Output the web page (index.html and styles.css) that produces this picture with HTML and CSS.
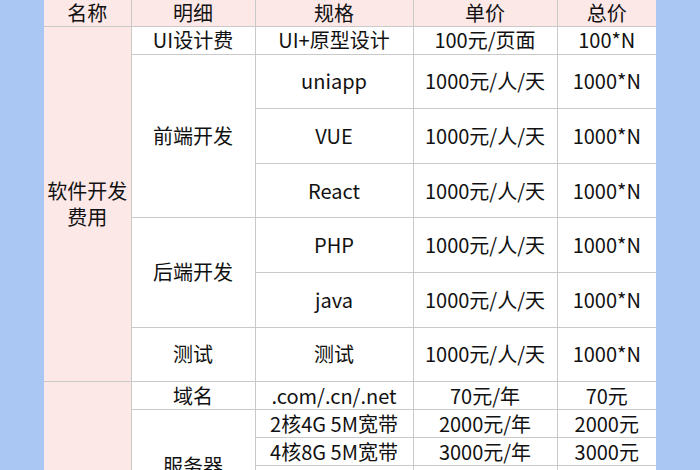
FILE: index.html
```html
<!DOCTYPE html>
<html lang="zh-CN">
<head>
<meta charset="utf-8">
<title>报价表</title>
<link rel="stylesheet" href="styles.css">
</head>
<body>
<div class="page">
  <table class="quote">
    <colgroup>
      <col class="c-name">
      <col class="c-item">
      <col class="c-spec">
      <col class="c-unit">
      <col class="c-total">
    </colgroup>
    <thead>
      <tr class="r1">
        <th class="cat">名称</th>
        <th>明细</th>
        <th>规格</th>
        <th>单价</th>
        <th>总价</th>
      </tr>
    </thead>
    <tbody>
      <tr class="r1">
        <td class="cat" rowspan="13"><span class="cat-text">软件开发<br>费用</span></td>
        <td>UI设计费</td>
        <td>UI+原型设计</td>
        <td>100元/页面</td>
        <td>100*N</td>
      </tr>
      <tr class="r1">
        <td rowspan="6">前端开发</td>
        <td rowspan="2">uniapp</td>
        <td rowspan="2">1000元/人/天</td>
        <td rowspan="2">1000*N</td>
      </tr>
      <tr class="r1"></tr>
      <tr class="r1">
        <td rowspan="2">VUE</td>
        <td rowspan="2">1000元/人/天</td>
        <td rowspan="2">1000*N</td>
      </tr>
      <tr class="r1"></tr>
      <tr class="r1">
        <td rowspan="2">React</td>
        <td rowspan="2">1000元/人/天</td>
        <td rowspan="2">1000*N</td>
      </tr>
      <tr class="r1"></tr>
      <tr class="r1">
        <td rowspan="4">后端开发</td>
        <td rowspan="2">PHP</td>
        <td rowspan="2">1000元/人/天</td>
        <td rowspan="2">1000*N</td>
      </tr>
      <tr class="r1"></tr>
      <tr class="r1">
        <td rowspan="2">java</td>
        <td rowspan="2">1000元/人/天</td>
        <td rowspan="2">1000*N</td>
      </tr>
      <tr class="r1"></tr>
      <tr class="r1">
        <td rowspan="2">测试</td>
        <td rowspan="2">测试</td>
        <td rowspan="2">1000元/人/天</td>
        <td rowspan="2">1000*N</td>
      </tr>
      <tr class="r1"></tr>
      <tr class="r3">
        <td class="cat" rowspan="10"><span class="cat-text">服务器<br>费用</span></td>
        <td>域名</td>
        <td>.com/.cn/.net</td>
        <td>70元/年</td>
        <td>70元</td>
      </tr>
      <tr class="r3">
        <td rowspan="4">服务器</td>
        <td>2核4G 5M宽带</td>
        <td>2000元/年</td>
        <td>2000元</td>
      </tr>
      <tr class="r3">
        <td>4核8G 5M宽带</td>
        <td>3000元/年</td>
        <td>3000元</td>
      </tr>
      <tr class="r3">
        <td>8核16G 5M宽带</td>
        <td>5000元/年</td>
        <td>5000元</td>
      </tr>
      <tr class="r3">
        <td>16核32G 10M宽带</td>
        <td>9000元/年</td>
        <td>9000元</td>
      </tr>
      <tr class="r3">
        <td>SSL证书</td>
        <td>DV单域名</td>
        <td>500元/年</td>
        <td>500元</td>
      </tr>
      <tr class="r3">
        <td>备案</td>
        <td>ICP备案</td>
        <td>免费</td>
        <td>0元</td>
      </tr>
      <tr class="r3">
        <td>维护</td>
        <td>技术支持</td>
        <td>1000元/月</td>
        <td>1000*N</td>
      </tr>
      <tr class="r3">
        <td>数据库</td>
        <td>MySQL</td>
        <td>800元/年</td>
        <td>800元</td>
      </tr>
      <tr class="r3">
        <td>存储</td>
        <td>OSS 100G</td>
        <td>300元/年</td>
        <td>300元</td>
      </tr>
    </tbody>
  </table>
</div>
</body>
</html>
```
FILE: styles.css
```css
html, body {
  margin: 0;
  padding: 0;
}
body {
  background: #a9c7f2;
  font-family: "Noto Sans CJK SC", "Noto Sans", sans-serif;
  color: #111111;
}
.page {
  padding: 0 44px;
  margin-top: -1px;
}
.quote {
  width: 612px;
  border-collapse: collapse;
  table-layout: fixed;
  background: #ffffff;
  font-size: 20px;
  line-height: 26px;
}
.c-name { width: 87px; }
.c-item { width: 124px; }
.c-spec { width: 158px; }
.c-unit { width: 144px; }
.c-total { width: 99px; }
.quote th,
.quote td {
  border: 1px solid #c9c9c9;
  padding: 0;
  text-align: center;
  vertical-align: middle;
  font-weight: normal;
  white-space: nowrap;
}
.quote thead th {
  background: #fde8e8;
}
.quote .cat {
  background: #fde8e8;
  border-left: none;
}
.quote th:last-child,
.quote td:last-child {
  border-right: none;
}
.r1 { height: 27.3px; }
.r3 { height: 28px; }
.cat-text {
  display: inline-block;
  line-height: 26px;
}
```
